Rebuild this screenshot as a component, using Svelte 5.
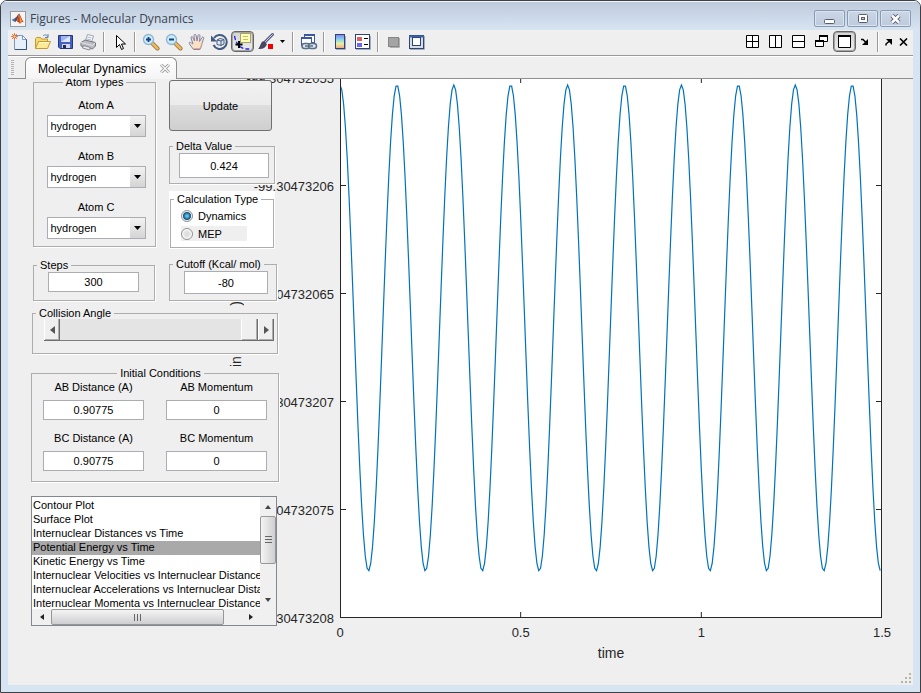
<script lang="ts">
  const atoms = ["A", "B", "C"];
  const elements = ["hydrogen", "deuterium", "tritium"];
  let atomTypes = $state(["hydrogen", "hydrogen", "hydrogen"]);

  let delta = $state("0.424");
  let calcType = $state("dynamics");
  let steps = $state("300");
  let cutoff = $state("-80");
  let angle = $state(180);

  let initial = $state([
    { label: "AB Distance (A)", value: "0.90775" },
    { label: "AB Momentum", value: "0" },
    { label: "BC Distance (A)", value: "0.90775" },
    { label: "BC Momentum", value: "0" },
  ]);

  const plots = [
    "Contour Plot",
    "Surface Plot",
    "Internuclear Distances vs Time",
    "Potential Energy vs Time",
    "Kinetic Energy vs Time",
    "Internuclear Velocities vs Internuclear Distances",
    "Internuclear Accelerations vs Internuclear Distances",
    "Internuclear Momenta vs Internuclear Distance",
  ];
  let plot = $state("Potential Energy vs Time");

  const yTicks = ["-99.304732055", "-99.30473206", "-99.304732065", "-99.30473207", "-99.304732075", "-99.30473208"];
  const xTicks = ["0", "0.5", "1", "1.5"];

  // Potential energy over time, 300 steps of 0.005
  const points = Array.from({ length: 300 }, (_, i) => {
    const t = i * 0.005;
    const y = 251 - 243 * Math.cos((2 * Math.PI * t) / 0.1575);
    return `${(t * 1000).toFixed(0)},${y.toFixed(1)}`;
  }).join(" ");
</script>

{#snippet magnifier(plus: boolean)}
  <svg width="18" height="18" viewBox="0 0 18 18">
    <path d="M10 10l5.500 5.500" stroke="#8a6a3c" stroke-width="4" stroke-linecap="round" />
    <path d="M10 10l5.500 5.500" stroke="#f0b95c" stroke-width="2.500" stroke-linecap="round" />
    <circle cx="6.5" cy="6.5" r="5" fill="#c9eef8" stroke="#8fb4d4" stroke-width="1.3" />
    <path d="M4 6.500h5" stroke="#1d3f86" stroke-width="1.800" />
    {#if plus}<path d="M6.500 4v5" stroke="#1d3f86" stroke-width="1.800" />{/if}
  </svg>
{/snippet}

<div class="window">
  <header class="titlebar">
    <svg class="logo" width="16" height="16" viewBox="0 0 16 16">
      <rect x="0.5" y="0.5" width="15" height="15" fill="#f4f4f4" stroke="#9a9a9a" />
      <path d="M1.500 9l3.500-2 2 2-2 2z" fill="#3a78b8" />
      <path d="M5 7c2-1 3-4 4-4.500L7.500 9 5 11z" fill="#6b4a52" />
      <path d="M9 2.500c1.500 1 2.500 6 5 9-1.500-1-2.500-.5-4 1.500-.8-1.500-1.500-2-3-2z" fill="#c8441c" />
      <path d="M9 3.500c.8 2 .8 5 1 9 1-1.500 1.500-2 2.200-2.200C11 8 10 5 9 3.500z" fill="#f09a3c" />
    </svg>
    <h1>Figures - Molecular Dynamics</h1>
    <button class="win-btn" aria-label="Minimize">
      <svg width="13" height="10" viewBox="0 0 13 10"><rect x="1.500" y="5.500" width="10" height="4" rx="1" fill="#fff" stroke="#585c70" /></svg>
    </button>
    <button class="win-btn" aria-label="Maximize">
      <svg width="12" height="10" viewBox="0 0 12 10"><rect x="1.500" y="0.500" width="9" height="8" rx="1" fill="#fff" stroke="#585c70" /><rect x="4.500" y="3.500" width="3" height="2" fill="#c4cfe0" stroke="#585c70" /></svg>
    </button>
    <button class="win-btn" aria-label="Close">
      <svg width="13" height="10" viewBox="0 0 13 10"><path d="M3 1.500l7 7M10 1.500l-7 7" stroke="#585c70" stroke-width="4.500" /><path d="M3 1.500l7 7M10 1.500l-7 7" stroke="#fff" stroke-width="2.500" /></svg>
    </button>
  </header>

  <div class="client">
    <div class="toolbar">
      <button aria-label="New Figure">
        <svg width="18" height="18" viewBox="0 0 18 18">
          <path d="M3.500 2.500h8l4 4v10h-12z" fill="#e6f0fb" stroke="#7d97c0" />
          <path d="M11.500 2.500v4h4z" fill="#fff" stroke="#7d97c0" />
          <path d="M15.500 6.500v10H4" stroke="#33517f" fill="none" />
          <path d="M1 1l5 5M6 1L1 6M3.500 0v7M0 3.500h7" stroke="#e8804a" />
          <circle cx="3.500" cy="3.500" r="1.500" fill="#fff0a0" stroke="#d8502c" />
        </svg>
      </button>
      <button aria-label="Open File">
        <svg width="18" height="18" viewBox="0 0 18 18">
          <path d="M9 3c2-2 4-1 5 1m0-3v3.500h-3" fill="none" stroke="#5b7fae" />
          <path d="M1.500 15.500V5.500l1-1h4l1 1.500h6v3" fill="#f5d878" stroke="#c49a2e" />
          <path d="M1.500 15.500l3-7h12l-3 7z" fill="#ffe991" stroke="#c49a2e" />
          <path d="M5 9.500h10" stroke="#fffbe0" />
        </svg>
      </button>
      <button aria-label="Save Figure">
        <svg width="18" height="18" viewBox="0 0 18 18">
          <path d="M1.500 2.500h14v13H3L1.500 14z" fill="#4560c4" stroke="#27367c" />
          <rect x="4" y="3" width="9" height="6" fill="#dfe6fa" />
          <path d="M4 3h9L4 9z" fill="#9db4ee" />
          <rect x="5" y="11" width="8" height="4" fill="#d4d8e4" />
          <rect x="6" y="12" width="3" height="3" fill="#1c2a60" />
        </svg>
      </button>
      <button aria-label="Print Figure">
        <svg width="18" height="18" viewBox="0 0 18 18">
          <path d="M5.500 8l2-6.500 6 1.500-2 6z" fill="#fff" stroke="#9aa2b8" />
          <path d="M7.500 4l4 1M7 6l4 1" stroke="#aab4d0" />
          <path d="M1 9.500l4-2.500 10.500 2.500v3.500l-3 3L1 13z" fill="#b9bcc2" stroke="#74777e" />
          <path d="M1 9.500l11.500 3 3-3" fill="none" stroke="#e4e5e8" />
          <path d="M3.500 12.500l7 2-1 2.500-7-2z" fill="#e9eaee" stroke="#888b92" />
        </svg>
      </button>
      <span class="sep"></span>
      <button aria-label="Edit Plot">
        <svg width="18" height="18" viewBox="0 0 18 18">
          <path d="M5.500 2.500v12l3-3 2 5 2-1-2-4.500h4z" fill="#fff" stroke="#000" />
        </svg>
      </button>
      <span class="sep"></span>
      <button aria-label="Zoom In">{@render magnifier(true)}</button>
      <button aria-label="Zoom Out">{@render magnifier(false)}</button>
      <button aria-label="Pan">
        <svg width="18" height="18" viewBox="0 0 18 18">
          <path d="M5.500 16.500l-4-5.500c-1-1.500.5-2.500 2-1l1.500 1L3 5c-.3-1.500 1.500-2 2-.5L6.500 8 6 2.500c0-1.500 2-1.500 2.200 0L9 8l1-5.500c.3-1.500 2-1 2 .3L11.500 8.500 14 4.500c.8-1.200 2.200-.3 1.600 1L14 10.500c-.3 2.500-1 4-2 6z" fill="#fce0c4" stroke="#7f86b0" />
          <path d="M5.500 15.500h6.500l1.500-4" fill="none" stroke="#e8a878" />
        </svg>
      </button>
      <button aria-label="Rotate 3D">
        <svg width="18" height="18" viewBox="0 0 18 18">
          <path d="M3 5a7 7 0 1 1-.5 7" fill="none" stroke="#435a80" stroke-width="2" />
          <path d="M0 2.500v6h6z" fill="#435a80" />
          <path d="M6 7l3-1.500 4 1V11l-3 1.500-4-1zM6 7l4 1 3-1.500M10 8v4.500" fill="#e3e9f4" stroke="#435a80" />
        </svg>
      </button>
      <button class="pressed" aria-label="Data Cursor">
        <svg width="18" height="18" viewBox="0 0 18 18">
          <path d="M0.500 3c1 5 2 7 5 10s6 3 12 3" fill="none" stroke="#2020e8" stroke-width="1.300" stroke-dasharray="4 2" />
          <rect x="6.500" y="0.500" width="10" height="9" fill="#ffffb0" stroke="#a8a070" />
          <path d="M9 3.500h5M9 6.500h5" stroke="#c4bc80" />
          <path d="M5 8v7M1.500 11.500h7" stroke="#000" stroke-width="2" />
        </svg>
      </button>
      <button aria-label="Brush Data">
        <svg width="18" height="18" viewBox="0 0 18 18">
          <path d="M8 9l7.500-7.500" stroke="#5c5f86" stroke-width="3" stroke-linecap="round" />
          <path d="M8.500 8.500l7-7" stroke="#c9cdea" stroke-linecap="round" />
          <path d="M6 8l4 3-1 2c-2 3-5 3-8 3 2-1 2-6 5-8z" fill="#454860" />
          <rect x="11" y="11" width="5" height="5" fill="#f00000" />
        </svg>
      </button>
      <button class="caret" aria-label="Brush Colors">
        <svg width="6" height="4" viewBox="0 0 6 4"><path d="M0 0h5L2.500 3z" /></svg>
      </button>
      <span class="sep"></span>
      <button aria-label="Link Plot">
        <svg width="18" height="18" viewBox="0 0 18 18">
          <rect x="4.500" y="1.500" width="10" height="8" fill="#fff" stroke="#3b5998" /><path d="M4 2h11" stroke="#3b5998" stroke-width="2" />
          <rect x="1.500" y="4.500" width="10" height="8" fill="#fff" stroke="#3b5998" /><path d="M1 5h11" stroke="#3b5998" stroke-width="2" />
          <rect x="2" y="10.500" width="8" height="5" rx="2.500" fill="#dbe8ee" stroke="#5a7088" stroke-width="1.500" />
          <rect x="8.500" y="10.500" width="8" height="5" rx="2.500" fill="#dbe8ee" stroke="#5a7088" stroke-width="1.500" />
          <path d="M5 13h8" stroke="#5a7088" stroke-width="1.500" />
        </svg>
      </button>
      <span class="sep"></span>
      <button aria-label="Insert Colorbar">
        <svg width="18" height="18" viewBox="0 0 18 18">
          <defs>
            <linearGradient id="bar" x1="0" y1="0" x2="0" y2="1">
              <stop offset="0" stop-color="#8c7ce8" /><stop offset="0.350" stop-color="#84d4f4" />
              <stop offset="0.650" stop-color="#e8f0a0" /><stop offset="1" stop-color="#f4a488" />
            </linearGradient>
          </defs>
          <path d="M5 16.500h9.500V3" fill="none" stroke="#a8acb4" />
          <rect x="4.500" y="1.500" width="9" height="14" fill="url(#bar)" stroke="#2c4478" />
        </svg>
      </button>
      <button aria-label="Insert Legend">
        <svg width="18" height="18" viewBox="0 0 18 18">
          <path d="M2 16.500h14.500V3" fill="none" stroke="#a8acb4" />
          <rect x="1.500" y="1.500" width="14" height="14" fill="#fff" stroke="#2c4478" />
          <rect x="3" y="4" width="5" height="4" fill="#e06060" /><rect x="3" y="10" width="5" height="4" fill="#6868f0" />
          <path d="M10 5.500h4M10 11.500h4" stroke="#000" />
        </svg>
      </button>
      <span class="sep"></span>
      <button aria-label="Hide Plot Tools">
        <svg width="18" height="18" viewBox="0 0 18 18">
          <path d="M5 14.500h9.500V5" fill="none" stroke="#b0b0b0" />
          <rect x="3.500" y="4.500" width="10" height="9" fill="#a4a4a4" stroke="#868686" />
        </svg>
      </button>
      <button aria-label="Show Plot Tools">
        <svg width="18" height="18" viewBox="0 0 18 18">
          <path d="M2 16.500h14.500V3" fill="none" stroke="#a8acb4" />
          <rect x="1.500" y="2.500" width="14" height="13" fill="#d8dce4" stroke="#2c4478" />
          <path d="M1 3.500h15" stroke="#3d66b0" stroke-width="2" />
          <rect x="4.500" y="4.500" width="8" height="8" fill="#fff" stroke="#2c4478" />
        </svg>
      </button>

      <span class="spacer"></span>

      <button aria-label="Tile">
        <svg width="13" height="13" viewBox="0 0 13 13"><path d="M.5.500h12v12H.5zM6.500.5v12M.5 6.500h12" fill="#fff" stroke="#000" /></svg>
      </button>
      <button aria-label="Left/Right Tile">
        <svg width="13" height="13" viewBox="0 0 13 13"><path d="M.5.500h12v12H.5zM6.500.5v12" fill="#fff" stroke="#000" /></svg>
      </button>
      <button aria-label="Top/Bottom Tile">
        <svg width="13" height="13" viewBox="0 0 13 13"><path d="M.5.500h12v12H.5zM.5 6.500h12" fill="#fff" stroke="#000" /></svg>
      </button>
      <button aria-label="Float">
        <svg width="13" height="13" viewBox="0 0 13 13">
          <path d="M4.500.5h8v6h-8z" fill="#fff" stroke="#000" /><path d="M4 1h9" stroke="#000" stroke-width="2" />
          <path d="M.5 5.500h8v6h-8z" fill="#fff" stroke="#000" /><path d="M0 6h9" stroke="#000" stroke-width="2" />
        </svg>
      </button>
      <button class="pressed" aria-label="Maximize Document">
        <svg width="13" height="13" viewBox="0 0 13 13"><path d="M.5.500h12v12H.5z" fill="#fff" stroke="#000" /><path d="M0 1h13" stroke="#000" stroke-width="2" /></svg>
      </button>
      <button class="mini" aria-label="Minimize Document">
        <svg width="8" height="8" viewBox="0 0 8 8"><path d="M0 1.500h2l3 3" fill="none" stroke="#000" stroke-width="1.500" /><path d="M7 1v6H1z" /></svg>
      </button>
      <span class="sep"></span>
      <button class="small" aria-label="Undock">
        <svg width="8" height="8" viewBox="0 0 8 8"><path d="M1 7.500V6l3.500-3" fill="none" stroke="#000" stroke-width="1.500" /><path d="M1 1h6v6z" /></svg>
      </button>
      <button class="small" aria-label="Close Document">
        <svg width="9" height="8" viewBox="0 0 9 8"><path d="M1 .5l7 7M8 .5l-7 7" stroke="#000" stroke-width="1.600" /></svg>
      </button>
    </div>

    <nav class="tabs">
      <span class="grip"></span>
      <div class="tab">
        <a href="#figure">Molecular Dynamics</a>
        <button aria-label="Close tab">
          <svg width="10" height="9" viewBox="0 0 10 9"><path d="M1 .5l8 8M9 .5l-8 8" stroke="#999" stroke-width="3" /><path d="M1 .5l8 8M9 .5l-8 8" stroke="#f8f8f8" stroke-width="1.300" /></svg>
        </button>
      </div>
    </nav>

    <main id="figure">
      <div class="controls">
        <div class="pair">
          <div class="column">
            <fieldset class="atoms">
              <legend>Atom Types</legend>
              {#each atoms as atom, i}
                <label>
                  Atom {atom}
                  <select bind:value={atomTypes[i]}>
                    {#each elements as element}
                      <option>{element}</option>
                    {/each}
                  </select>
                </label>
              {/each}
            </fieldset>
            <fieldset class="steps">
              <legend>Steps</legend>
              <input type="text" aria-label="Steps" bind:value={steps} />
            </fieldset>
          </div>

          <div class="column">
            <button class="update">Update</button>
            <fieldset class="delta">
              <legend>Delta Value</legend>
              <input type="text" aria-label="Delta Value" bind:value={delta} />
            </fieldset>
            <div class="white">
              <fieldset class="calc">
                <legend>Calculation Type</legend>
                <label><input type="radio" name="calc" value="dynamics" bind:group={calcType} />Dynamics</label>
                <label class="gray"><input type="radio" name="calc" value="mep" bind:group={calcType} />MEP</label>
              </fieldset>
            </div>
            <fieldset class="cutoff">
              <legend>Cutoff (Kcal/ mol)</legend>
              <input type="text" aria-label="Cutoff (Kcal/ mol)" bind:value={cutoff} />
            </fieldset>
          </div>
        </div>

        <fieldset class="collision">
          <legend>Collision Angle</legend>
          <div class="slider">
            <button aria-label="Decrease angle" onclick={() => (angle = Math.max(0, angle - 1))}>
              <svg width="5" height="8" viewBox="0 0 5 8"><path d="M5 0v8L0 4z" fill="#555" /></svg>
            </button>
            <input type="range" min="0" max="180" aria-label="Collision Angle" bind:value={angle} />
            <button aria-label="Increase angle" onclick={() => (angle = Math.min(180, angle + 1))}>
              <svg width="5" height="8" viewBox="0 0 5 8"><path d="M0 0v8l5-4z" fill="#555" /></svg>
            </button>
          </div>
        </fieldset>

        <fieldset class="initial">
          <legend>Initial Conditions</legend>
          {#each initial as field}
            <label>
              {field.label}
              <input type="text" bind:value={field.value} />
            </label>
          {/each}
        </fieldset>

        <div class="list">
          <select size="8" aria-label="Plot type" bind:value={plot}>
            {#each plots as name}
              <option>{name}</option>
            {/each}
          </select>
          <div class="vbar">
            <button aria-label="Scroll up"><svg width="6" height="4" viewBox="0 0 6 4"><path d="M0 4h6L3 0z" fill="#444" /></svg></button>
            <span class="thumb"><svg width="7" height="8" viewBox="0 0 7 8"><path d="M0 .5h7M0 3.500h7M0 6.500h7" stroke="#666" /></svg></span>
            <button class="end" aria-label="Scroll down"><svg width="6" height="4" viewBox="0 0 6 4"><path d="M0 0h6L3 4z" fill="#444" /></svg></button>
          </div>
          <div class="hbar">
            <button aria-label="Scroll left"><svg width="4" height="6" viewBox="0 0 4 6"><path d="M4 0v6L0 3z" fill="#222" /></svg></button>
            <span class="thumb"><svg width="8" height="7" viewBox="0 0 8 7"><path d="M.5 0v7M3.500 0v7M6.500 0v7" stroke="#666" /></svg></span>
            <button class="end" aria-label="Scroll right"><svg width="4" height="6" viewBox="0 0 4 6"><path d="M0 0v6l4-3z" fill="#222" /></svg></button>
          </div>
        </div>
      </div>

      <div class="chart">
        <div class="y-axis">
          <span class="y-label">PE (in Hartree)</span>
          <div class="y-ticks">
            {#each yTicks as tick}
              <span>{tick}</span>
            {/each}
          </div>
        </div>
        <div class="plot">
          <svg class="axes" width="100%" height="541">
            <svg width="100%" height="541" viewBox="0 0 1500 541" preserveAspectRatio="none">
              <polyline {points} fill="none" stroke="#0072bd" stroke-width="1.200" vector-effect="non-scaling-stroke" />
            </svg>
            {#each [108, 216, 324, 432] as y}
              <line x1="0" x2="6" y1={y + 0.5} y2={y + 0.5} />
              <svg x="100%" overflow="visible"><line x1="-6" x2="0" y1={y + 0.5} y2={y + 0.5} /></svg>
            {/each}
            {#each [1, 2] as x}
              <line x1="{(x / 3) * 100}%" x2="{(x / 3) * 100}%" y1="535" y2="541" />
              <line x1="{(x / 3) * 100}%" x2="{(x / 3) * 100}%" y1="0" y2="6" />
            {/each}
          </svg>
          <div class="x-ticks">
            {#each xTicks as tick}
              <span>{tick}</span>
            {/each}
          </div>
          <p class="x-label">time</p>
        </div>
      </div>

      <svg class="resize" width="12" height="12" viewBox="0 0 12 12">
        <path d="M9 1h2v2H9zM5 5h2v2H5zM9 5h2v2H9zM1 9h2v2H1zM5 9h2v2H5zM9 9h2v2H9z" fill="#b8b4a4" />
      </svg>
    </main>
  </div>
</div>

<style>
  :global(body) {
    background: #fff;
  }

  .window {
    box-sizing: border-box;
    min-height: 100vh;
    display: flex;
    flex-direction: column;
    padding: 0 7px 7px;
    border: 1px solid #3f4044;
    border-radius: 7px 7px 0 0;
    background: #d7e4f2;
    font-family: "Liberation Sans", Arial, sans-serif;
    font-size: 11px;
    color: #000;
    overflow: hidden;
  }

  button {
    padding: 0;
    border: 0;
    background: none;
    font: inherit;
    color: inherit;
    display: flex;
    align-items: center;
    justify-content: center;
  }

  .titlebar {
    display: flex;
    align-items: center;
    gap: 2px;
    height: 29px;
    margin: 0 -7px;
    padding: 6px 9px 0;
    box-sizing: border-box;
    background: linear-gradient(#bccadb, #d7e4f2);
    box-shadow: inset 0 1px #f0f5fa;
  }

  .titlebar h1 {
    flex: 1;
    margin: 0 0 0 2px;
    font: 12px "Open Sans", "Noto Sans", sans-serif;
    color: #3c4450;
  }

  .win-btn {
    width: 31px;
    height: 17px;
    border: 1px solid #8a9ab4;
    border-radius: 2px;
    background: linear-gradient(#cbd7e6, #bccadc);
    box-shadow: inset 0 0 0 1px #dbe5f0;
  }

  .client {
    flex: 1;
    display: flex;
    flex-direction: column;
    background: #efefef;
  }

  .toolbar {
    display: flex;
    align-items: center;
    height: 26px;
    padding: 0 3px 2px 0;
    border-bottom: 1px solid #999;
    box-sizing: border-box;
  }

  .toolbar button {
    box-sizing: border-box;
    width: 23px;
    height: 21px;
    flex: none;
  }

  .toolbar .pressed {
    border: 1px solid #666;
    border-radius: 4px;
    background: linear-gradient(#d4d4d4, #ececec);
    box-shadow: inset 0 0 0 1px #a4a4a4;
  }

  .toolbar .caret {
    width: 12px;
  }

  .toolbar .mini {
    width: 18px;
  }

  .toolbar .small {
    width: 14px;
  }

  .sep {
    width: 1px;
    height: 20px;
    margin: 0 3px;
    background: #999;
    border-right: 1px solid #fff;
    flex: none;
  }

  .spacer {
    flex: 1;
  }

  .tabs {
    display: flex;
    align-items: flex-end;
    height: 23px;
    box-sizing: border-box;
    border-top: 1px solid #fff;
    border-bottom: 1px solid #8f8f8f;
  }

  .grip {
    width: 3px;
    height: 16px;
    margin: 0 11px 2px 3px;
    background: repeating-linear-gradient(#b4b4b4 0 1px, #efefef 1px 2px);
  }

  .tab {
    display: flex;
    align-items: center;
    gap: 14px;
    height: 21px;
    margin-bottom: -1px;
    padding: 0 6px 0 12px;
    border: 1px solid #8f8f8f;
    border-bottom: 0;
    border-radius: 6px 6px 0 0;
    background: linear-gradient(#fff, #f4f4f4);
  }

  .tab a {
    font-size: 12px;
    color: #000;
    text-decoration: none;
  }

  main {
    flex: 1;
    display: flex;
    position: relative;
    overflow: hidden;
  }

  /* The panels sit over the left part of the chart */
  .controls {
    flex: none;
    width: 248px;
    margin-left: 23px;
    z-index: 1;
  }

  .pair {
    display: flex;
    gap: 13px;
    padding-left: 2px;
  }

  .column {
    display: flex;
    flex-direction: column;
  }

  fieldset {
    box-sizing: border-box;
    min-width: 0;
    margin: 0;
    padding: 0;
    border: 1px solid #adadad;
    box-shadow: 1px 1px #fff, 0 -7px #efefef;
    background: #efefef;
  }

  legend {
    padding: 0 3px;
    margin-left: 3px;
    line-height: 12px;
    height: 12px;
    background: #efefef;
  }

  input[type="text"] {
    display: block;
    box-sizing: border-box;
    padding: 0;
    border: 1px solid #abadb3;
    background: #fff;
    font: inherit;
    text-align: center;
  }

  .atoms {
    width: 123px;
    height: 171px;
    margin-top: -3px;
    display: flex;
    flex-direction: column;
    align-items: center;
    gap: 13px;
  }

  .atoms legend {
    margin: 0 auto;
  }

  .atoms label {
    display: flex;
    flex-direction: column;
    align-items: center;
    gap: 4px;
    padding-left: 3px;
    line-height: 12px;
  }

  .atoms label:first-of-type {
    margin-top: 11px;
  }

  .atoms select {
    appearance: none;
    width: 99px;
    height: 22px;
    padding: 0 3px;
    border: 1px solid #abadb3;
    border-radius: 0;
    font: inherit;
    color: #000;
    background:
      url("data:image/svg+xml,%3Csvg xmlns='http://www.w3.org/2000/svg' width='7' height='4'%3E%3Cpath d='M0 0h7L3.500 4z'/%3E%3C/svg%3E") no-repeat right 4px center,
      linear-gradient(#f2f2f2, #d4d4d4) no-repeat right / 15px 100%,
      #fff;
  }

  .steps {
    width: 122px;
    height: 42px;
    margin-top: 12px;
  }

  .steps input {
    width: 91px;
    height: 20px;
    margin: 1px 0 0 14px;
  }

  .update {
    width: 103px;
    height: 51px;
    margin-top: 1px;
    border: 1px solid #707070;
    border-radius: 3px;
    background: linear-gradient(#f2f2f2, #ebebeb 50%, #dddddd 50%, #cfcfcf);
  }

  .delta {
    width: 106px;
    height: 44px;
    margin-top: 9px;
  }

  .delta input {
    width: 90px;
    height: 25px;
    margin: 1px 0 0 9px;
  }

  .white {
    width: 106px;
    margin-top: 7px;
    padding: 2px 0 1px 1px;
    box-sizing: border-box;
    background: #fff;
  }

  .calc {
    width: 104px;
    height: 55px;
    box-shadow: none;
  }

  .calc,
  .calc legend {
    background: #fff;
  }

  .calc label {
    display: flex;
    align-items: center;
    gap: 5px;
    width: 66px;
    height: 15px;
    margin: 3px 0 0 10px;
  }

  .calc .gray {
    background: #efefef;
  }

  .calc input {
    appearance: none;
    width: 12px;
    height: 12px;
    margin: 0;
    border: 1px solid #8e8f8f;
    border-radius: 50%;
    background: radial-gradient(#d8d8d8, #fafafa);
    box-shadow: inset 0 0 0 1px #fff;
    flex: none;
  }

  .calc input:checked {
    background: radial-gradient(circle, #58c0ee 0 1px, #0b3d63 4px, #e8eef2 5px);
  }

  .cutoff {
    width: 108px;
    height: 43px;
    margin-top: 9px;
  }

  .cutoff input {
    width: 84px;
    height: 23px;
    margin: 1px 0 0 14px;
  }

  .collision {
    width: 246px;
    height: 47px;
    margin: 6px 0 0 1px;
  }

  .slider {
    display: flex;
    height: 22px;
    margin: 0 3px 0 11px;
    background: #e4e4e4;
  }

  .slider button {
    width: 16px;
    flex: none;
    background: #efefef;
    box-shadow: inset -1px -1px #6d6d6d, inset 1px 0 #fff, inset -2px -2px #adadad;
  }

  .slider input {
    appearance: none;
    flex: 1;
    min-width: 0;
    margin: 0;
    background: #e4e4e4;
    box-shadow: inset 0 -1px #7d7d7d;
  }

  .slider input::-webkit-slider-thumb {
    appearance: none;
    width: 17px;
    height: 22px;
    background: #efefef;
    box-shadow: inset -1px -1px #6d6d6d, inset 1px 0 #fff, inset -2px -2px #adadad;
  }

  .initial {
    display: grid;
    grid-template-columns: 101px 101px;
    column-gap: 22px;
    row-gap: 12px;
    align-content: start;
    height: 115px;
    padding: 2px 0 0 11px;
    margin-top: 13px;
  }

  .initial legend {
    margin: 0 auto;
  }

  .initial label {
    display: flex;
    flex-direction: column;
    gap: 7px;
    text-align: center;
    line-height: 12px;
  }

  .initial input {
    width: 100%;
    height: 20px;
  }

  .list {
    display: grid;
    grid-template-columns: 1fr 16px;
    grid-template-rows: 112px 16px;
    width: 246px;
    box-sizing: border-box;
    margin-top: 14px;
    border: 1px solid #828790;
    background: #f0f0f0;
  }

  .list select {
    min-width: 0;
    height: 112px;
    padding: 2px 0 0;
    border: 0;
    border-radius: 0;
    outline: 0;
    background: #fff;
    font: inherit;
    color: #000;
    overflow: hidden;
    scrollbar-width: none;
  }

  .list option {
    min-height: 14px;
    height: 14px;
    padding: 0 1px;
    box-sizing: border-box;
    line-height: 14px;
  }

  .list option:checked {
    background: linear-gradient(#a9a9a9, #a9a9a9);
    color: #000;
  }

  .vbar,
  .hbar {
    display: flex;
    background: #f0f0f0;
  }

  .vbar {
    flex-direction: column;
  }

  .vbar button {
    height: 19px;
  }

  .hbar button {
    width: 19px;
  }

  .vbar .end {
    margin-top: auto;
  }

  .hbar .end {
    margin-left: auto;
  }

  .thumb {
    display: flex;
    align-items: center;
    justify-content: center;
    box-sizing: border-box;
    border: 1px solid #979797;
    border-radius: 2px;
  }

  .vbar .thumb {
    height: 48px;
    background: linear-gradient(90deg, #f4f4f4, #cfcfd2);
  }

  .hbar .thumb {
    width: 173px;
    background: linear-gradient(#f4f4f4, #cfcfd2);
  }

  .chart {
    flex: 1;
    min-width: 0;
    display: flex;
    align-items: flex-start;
    margin: -2px 31px 0 -50px;
    font-size: 13px;
    color: #262626;
  }

  .y-axis {
    display: flex;
    align-items: center;
    justify-content: space-between;
    width: 105px;
    height: 541px;
    margin-right: 6px;
    flex: none;
  }

  .y-label {
    writing-mode: vertical-rl;
    transform: rotate(180deg);
    font-size: 14px;
    line-height: 14px;
    white-space: nowrap;
  }

  .y-ticks {
    display: flex;
    flex-direction: column;
    align-items: flex-end;
    justify-content: space-between;
    box-sizing: border-box;
    height: 543px;
    padding-top: 2px;
    width: 90px;
  }

  .y-ticks span {
    display: flex;
    align-items: center;
    height: 0;
  }

  .plot {
    flex: 1;
    min-width: 0;
  }

  .axes {
    display: block;
    box-sizing: border-box;
    background: #fff;
    outline: 1px solid #262626;
    outline-offset: -1px;
  }

  .axes line {
    stroke: #262626;
  }

  .x-ticks {
    display: flex;
    justify-content: space-between;
    margin-top: 8px;
    line-height: 14px;
  }

  .x-ticks span {
    display: flex;
    justify-content: center;
    width: 0;
  }

  .x-label {
    margin: 5px 0 0;
    font-size: 14px;
    line-height: 16px;
    text-align: center;
  }

  .resize {
    position: absolute;
    right: 1px;
    bottom: 1px;
  }
</style>
